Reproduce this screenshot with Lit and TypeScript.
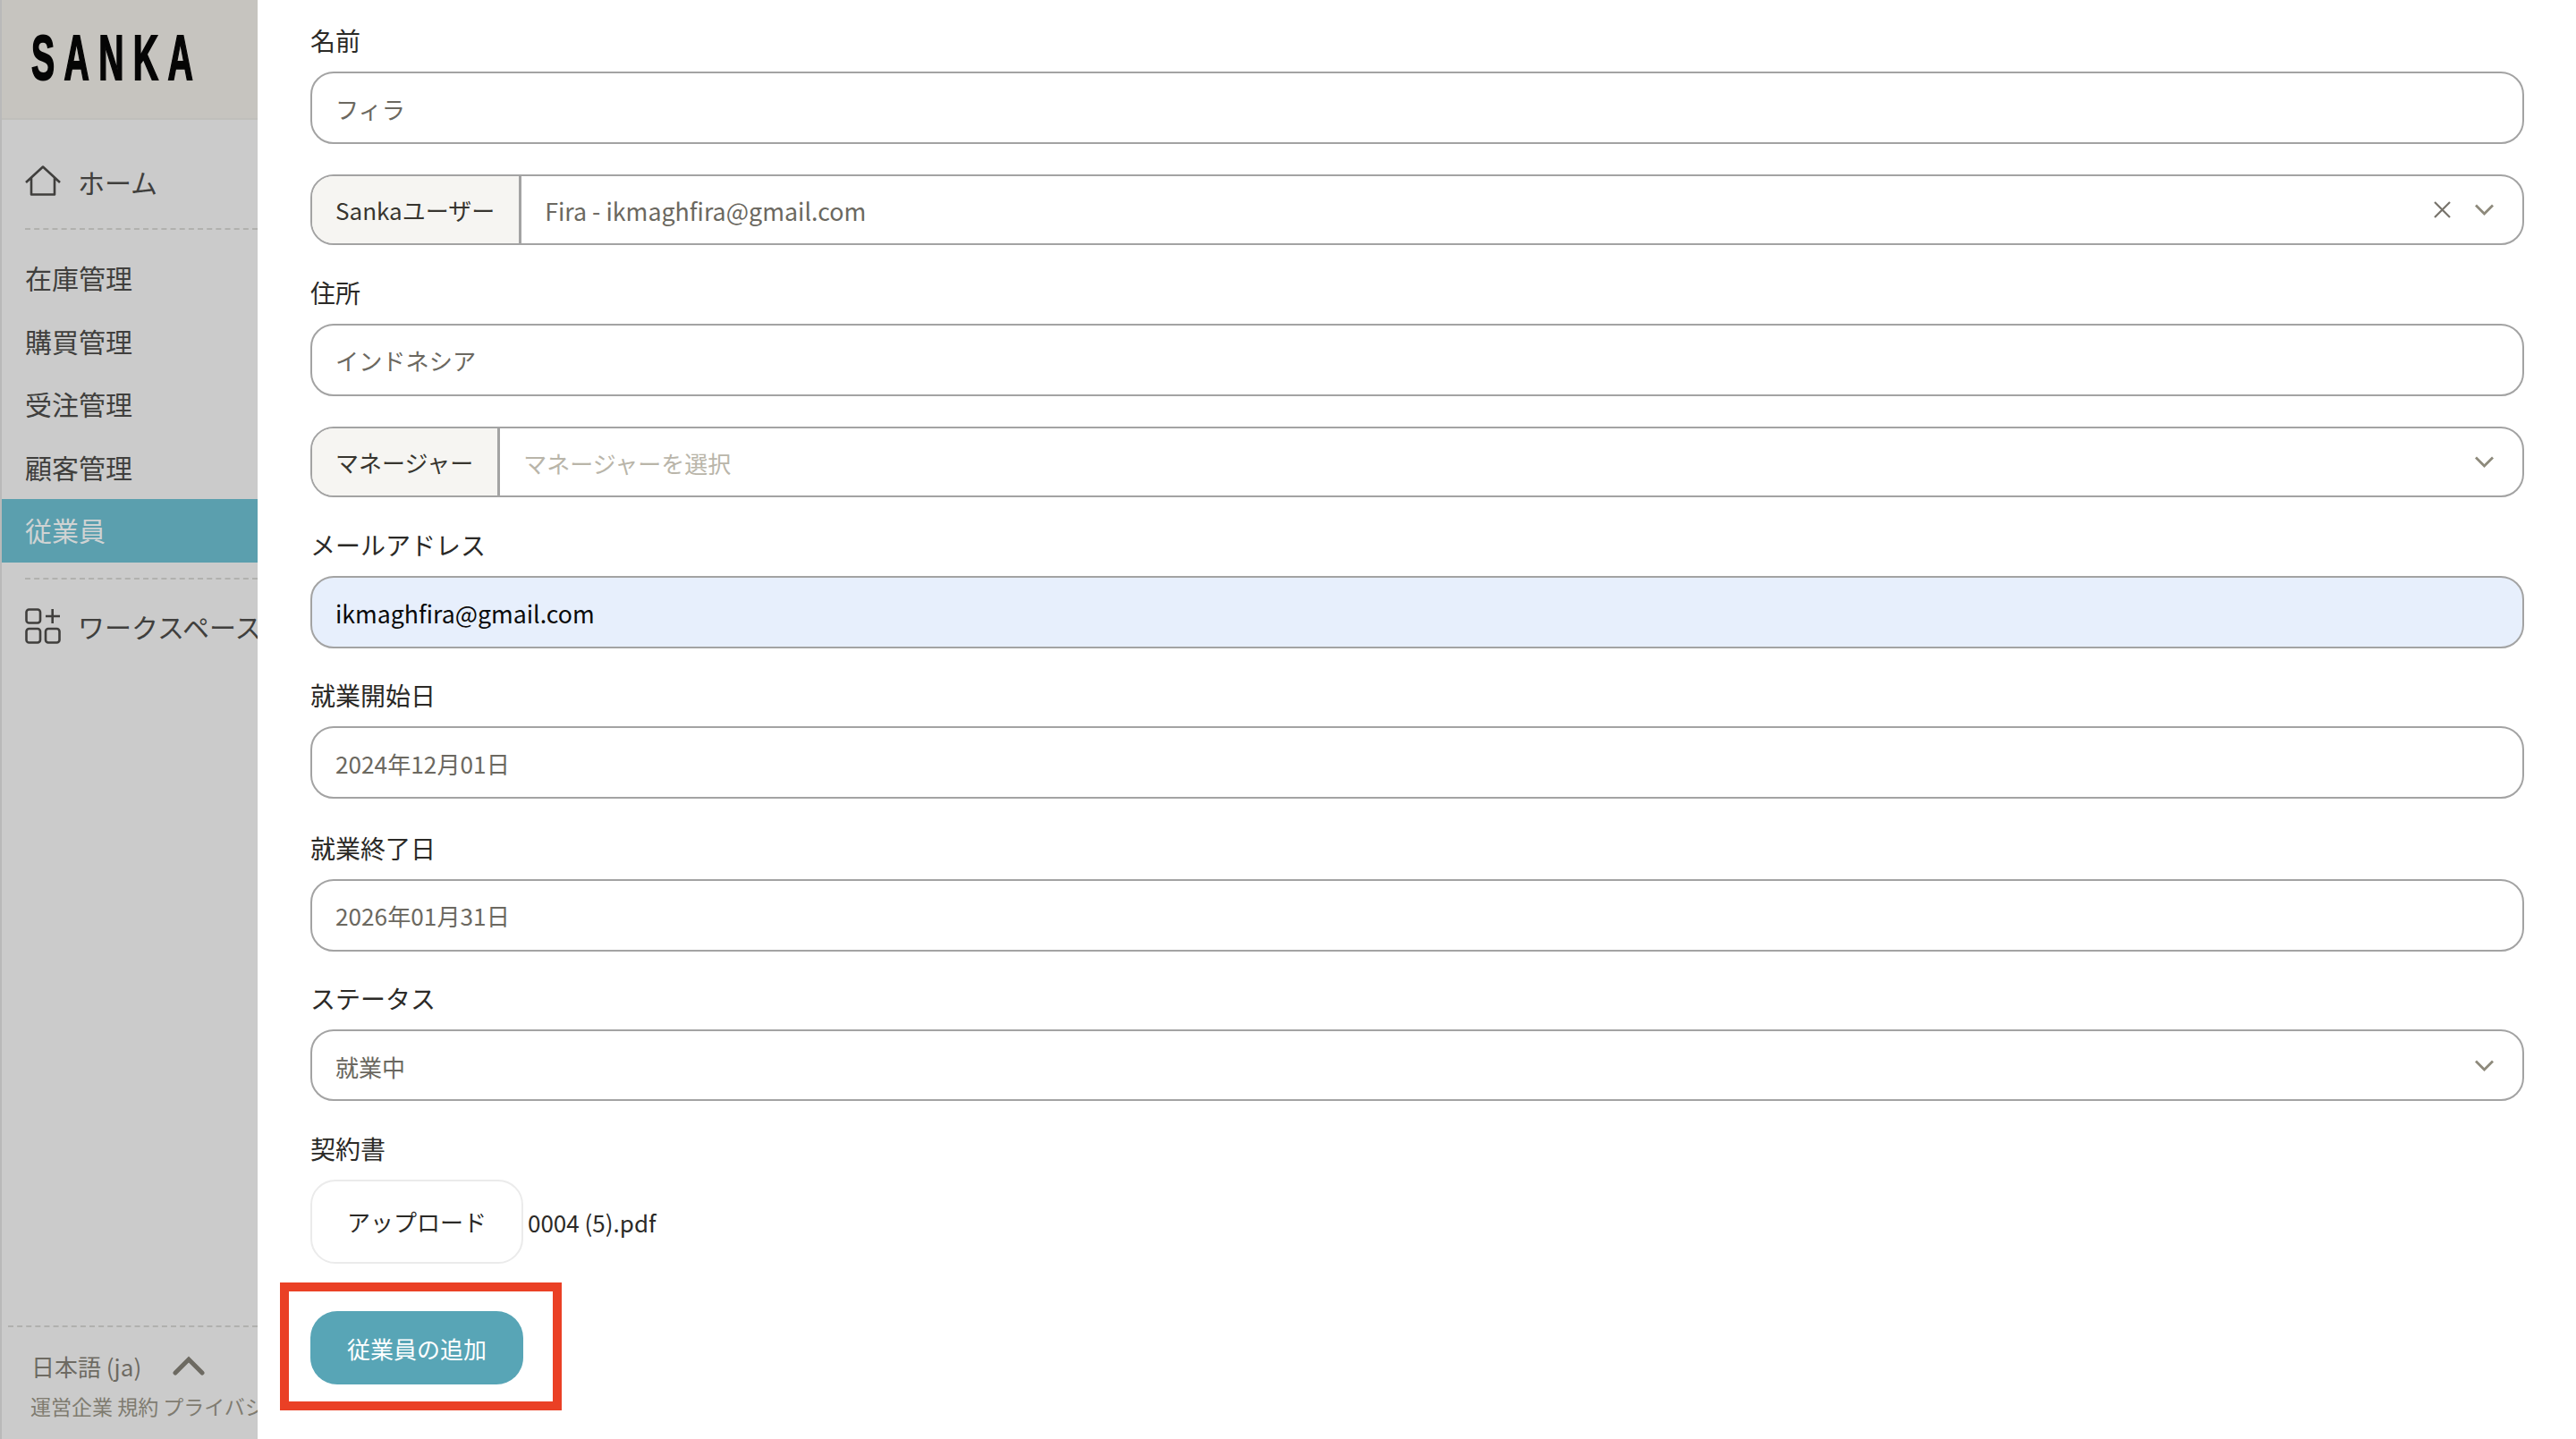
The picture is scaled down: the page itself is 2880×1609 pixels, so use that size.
import { LitElement, html, css } from "lit";
import { customElement } from "lit/decorators.js";

const chevron = html`<svg class="chev" width="21" height="13" viewBox="0 0 21 13" fill="none"><path d="M1 1.5 L10.5 11 L20 1.5" stroke="#8e8a7c" stroke-width="2.8"/></svg>`;
const cross = html`<svg class="cross" width="19" height="19" viewBox="0 0 19 19" fill="none"><path d="M1 1 L18 18 M18 1 L1 18" stroke="#77736b" stroke-width="2.2"/></svg>`;

@customElement("app-root")
export class AppRoot extends LitElement {
  static styles = css`
    :host {
      display: flex;
      width: 2880px;
      height: 1609px;
      overflow: hidden;
      background: #fff;
      font-family: "Noto Sans CJK JP", "Noto Sans", sans-serif;
      color: #37352f;
    }
    .side {
      width: 288px;
      flex: none;
      box-sizing: border-box;
      height: 1609px;
      background: #cbcbcb;
      border-left: 2px solid #b9b9b9;
      display: flex;
      flex-direction: column;
      overflow: hidden;
    }
    .brand {
      height: 134px;
      flex: none;
      background: #c6c4bf;
      border-bottom: 2px solid #c0bfbb;
      box-sizing: border-box;
      display: flex;
      align-items: center;
      padding: 0 0 3px 33px;
    }
    .logo {
      font-family: "Liberation Sans Narrow", "Liberation Sans", sans-serif;
      font-weight: 700;
      font-size: 70px;
      line-height: 70px;
      color: #050505;
      letter-spacing: 18.5px;
      -webkit-text-stroke: 2px #050505;
      transform: scaleX(0.56);
      transform-origin: left center;
      white-space: nowrap;
    }
    .primary {
      display: flex;
      align-items: center;
      gap: 19px;
      height: 70px;
      padding-left: 26px;
      font-size: 30px;
      color: #403f3d;
      white-space: nowrap;
      flex: none;
    }
    .primary svg { flex: none; }
    .home { margin-top: 34px; }
    .home svg { margin-bottom: 2px; }
    .dash {
      flex: none;
      height: 0;
      margin-left: 26px;
      border-top: 2px dashed #b1b1ae;
    }
    .dash1 { margin-top: 17px; margin-bottom: 19px; }
    .dash2 { margin-top: 17px; margin-bottom: 17px; }
    .item {
      flex: none;
      height: 70.5px;
      line-height: 68px;
      padding-left: 26px;
      font-size: 30px;
      color: #403f3d;
      white-space: nowrap;
    }
    .item.active {
      background: #5b9fae;
      color: #cfd3d3;
    }
    .foot {
      margin-top: auto;
      flex: none;
    }
    .foot-dash {
      height: 0;
      margin-left: 7px;
      border-top: 2px dashed #b1b1ae;
    }
    .lang {
      display: flex;
      align-items: center;
      gap: 35px;
      padding-left: 33px;
      margin-top: 24px;
      height: 38px;
      font-size: 26px;
      color: #6d6a62;
      white-space: nowrap;
    }
    .links {
      padding-left: 32px;
      margin-top: 8px;
      margin-bottom: 19px;
      height: 36px;
      line-height: 36px;
      font-size: 23px;
      color: #7f7b70;
      white-space: nowrap;
    }
    .main {
      flex: 1;
      min-width: 0;
      box-sizing: border-box;
      padding: 26px 58px 0 59px;
      display: flex;
      flex-direction: column;
      gap: 33.7px;
    }
    .field { display: flex; flex-direction: column; gap: 14px; }
    .field.late { margin-top: 1.5px; }
    .label {
      height: 40px;
      line-height: 38px;
      font-size: 28px;
      color: #2b2a27;
    }
    .input {
      box-sizing: border-box;
      height: 81px;
      border: 2px solid #a3a3a3;
      border-radius: 26px;
      padding: 0 26px;
      display: flex;
      align-items: center;
      font-size: 26.2px;
      color: #6b6860;
      background: #fff;
    }
    .input span { position: relative; top: 1px; }
    .input.filled {
      background: #e7effc;
      color: #0a0a0a;
      font-size: 26.7px;
    }
    .group {
      box-sizing: border-box;
      height: 79.5px;
      flex: none;
      border: 2px solid #a3a3a3;
      border-radius: 26px;
      display: flex;
      align-items: stretch;
      font-size: 26px;
      overflow: hidden;
    }
    .prefix {
      background: #f6f5f2;
      border-right: 3px solid #a3a3a3;
      padding: 0 27px 0 26px;
      display: flex;
      align-items: center;
      color: #37352f;
      white-space: nowrap;
    }
    .value {
      flex: 1;
      display: flex;
      align-items: center;
      padding: 2px 26px 0;
      color: #6b6860;
    }
    .value.latin { font-size: 26.8px; }
    .value.ph { color: #b9b5a9; }
    .icons {
      display: flex;
      align-items: center;
      gap: 27px;
      padding-right: 32px;
    }
    .upload {
      display: flex;
      align-items: center;
      gap: 5px;
    }
    .upload-btn {
      box-sizing: border-box;
      width: 238px;
      height: 94px;
      border: 2px solid #ebebeb;
      border-radius: 28px;
      display: flex;
      align-items: center;
      justify-content: center;
      font-size: 26px;
      color: #2b2a27;
    }
    .file { font-size: 26px; color: #2b2a27; padding-top: 2px; }
    .action {
      position: relative;
      margin-top: 19.5px;
      width: 238px;
      height: 82px;
    }
    .submit {
      box-sizing: border-box;
      width: 238px;
      height: 82px;
      padding-top: 2px;
      border-radius: 30px;
      background: #58a5b6;
      color: #fff;
      display: flex;
      align-items: center;
      justify-content: center;
      font-size: 26px;
    }
    .mark {
      position: absolute;
      left: -34px;
      top: -32px;
      width: 315px;
      height: 143px;
      box-sizing: border-box;
      border: 10px solid #ea4025;
    }
  `;

  private input(label: string, value: string, filled = false, late = false) {
    return html`<div class="field ${late ? "late" : ""}">
      <div class="label">${label}</div>
      <div class="input ${filled ? "filled" : ""}"><span>${value}</span></div>
    </div>`;
  }

  render() {
    return html`
      <aside class="side">
        <div class="brand"><div class="logo">SANKA</div></div>
        <div class="primary home">
          <svg width="40" height="34" viewBox="0 0 40 34" fill="none"><path d="M1 19 L20 1.5 L39 19 M7 14 V32.5 H33 V14" stroke="#403f3d" stroke-width="2.6" stroke-linejoin="round"/></svg>
          <span>ホーム</span>
        </div>
        <div class="dash dash1"></div>
        <div class="item">在庫管理</div>
        <div class="item">購買管理</div>
        <div class="item">受注管理</div>
        <div class="item">顧客管理</div>
        <div class="item active">従業員</div>
        <div class="dash dash2"></div>
        <div class="primary">
          <svg width="40" height="40" viewBox="0 0 40 40" fill="none" stroke="#403f3d" stroke-width="2.6"><rect x="1.5" y="1.5" width="15.5" height="15" rx="3"/><rect x="1.5" y="23" width="15.5" height="15.5" rx="3"/><rect x="23" y="23" width="15.5" height="15.5" rx="3"/><path d="M30.7 1 V17 M23 9 H39"/></svg>
          <span>ワークスペース</span>
        </div>
        <div class="foot">
          <div class="foot-dash"></div>
          <div class="lang">
            <span>日本語 (ja)</span>
            <svg width="36" height="22" viewBox="0 0 36 22" fill="none"><path d="M3 19 L18 4 L33 19" stroke="#6d6a62" stroke-width="5" stroke-linecap="round"/></svg>
          </div>
          <div class="links">運営企業 規約 プライバシー</div>
        </div>
      </aside>
      <main class="main">
        ${this.input("名前", "フィラ")}
        <div class="group">
          <div class="prefix">Sankaユーザー</div>
          <div class="value latin">Fira - ikmaghfira@gmail.com</div>
          <div class="icons">${cross}${chevron}</div>
        </div>
        ${this.input("住所", "インドネシア")}
        <div class="group">
          <div class="prefix">マネージャー</div>
          <div class="value ph">マネージャーを選択</div>
          <div class="icons">${chevron}</div>
        </div>
        ${this.input("メールアドレス", "ikmaghfira@gmail.com", true)}
        ${this.input("就業開始日", "2024年12月01日")}
        ${this.input("就業終了日", "2026年01月31日", false, true)}
        <div class="field">
          <div class="label">ステータス</div>
          <div class="group">
            <div class="value">就業中</div>
            <div class="icons">${chevron}</div>
          </div>
        </div>
        <div class="field">
          <div class="label">契約書</div>
          <div class="upload">
            <div class="upload-btn">アップロード</div>
            <div class="file">0004 (5).pdf</div>
          </div>
        </div>
        <div class="action">
          <div class="submit">従業員の追加</div>
          <div class="mark"></div>
        </div>
      </main>
    `;
  }
}
